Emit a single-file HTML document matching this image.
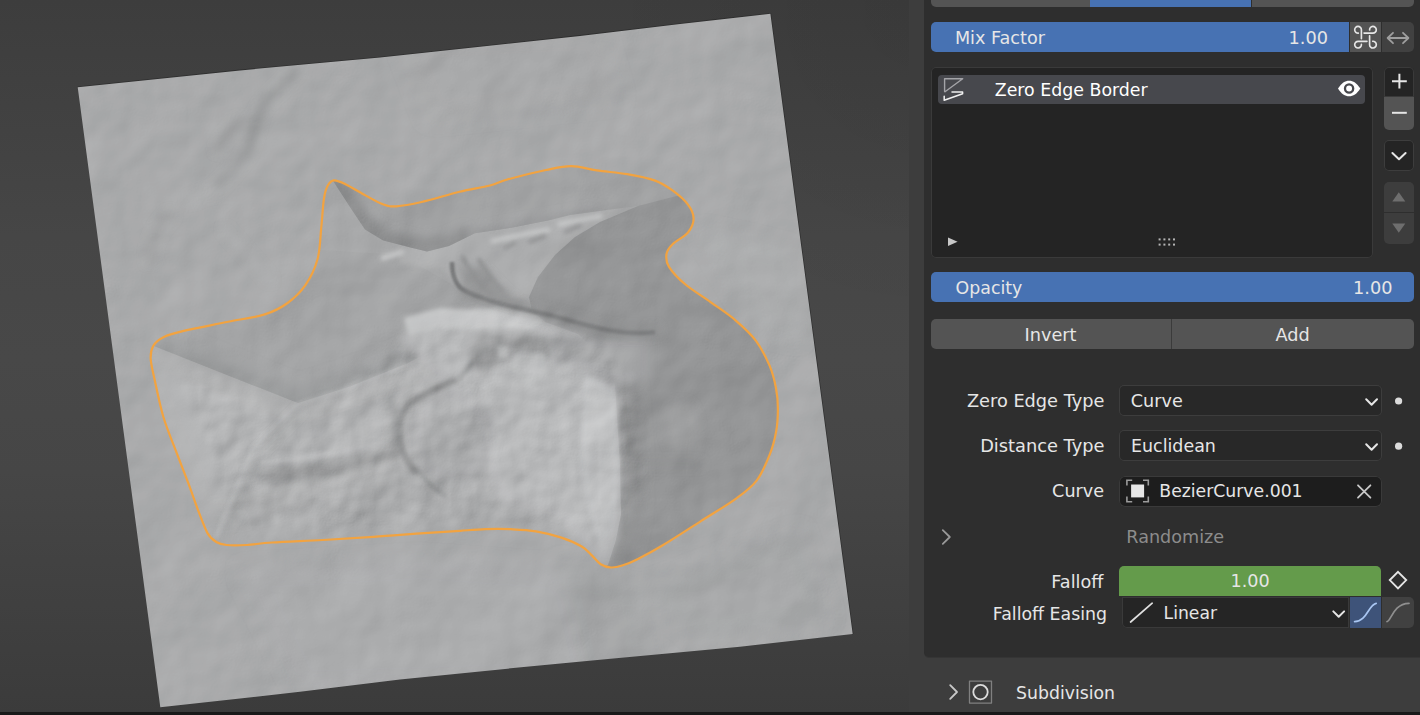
<!DOCTYPE html>
<html><head><meta charset="utf-8"><title>Blender</title>
<style>
html,body{margin:0;padding:0;background:#3d3d3d;}
body{width:1420px;height:715px;position:relative;overflow:hidden;font-family:"DejaVu Sans","Liberation Sans",sans-serif;font-size:17.6px;color:#e6e6e6;}
.abs{position:absolute;}
#vp{position:absolute;left:0;top:0;}
#props{position:absolute;left:909px;top:0;width:511px;height:715px;background:#3d3d3d;}
#panel{position:absolute;left:923.5px;top:0;width:497px;height:657.3px;background:#2e2e2e;border-bottom-left-radius:5px;box-shadow:0 1px 0 #353535;}
#bottom{position:absolute;left:0;top:711.5px;width:1420px;height:4px;background:#191919;}
.t{position:absolute;white-space:pre;line-height:20px;height:20px;}
.lbl{text-align:right;}
.blue{background:#4772b3;}
.btn{background:#545454;}
.fld{background:#282828;box-shadow:inset 0 0 0 1px #3d3d3d;border-radius:5px;}
svg{position:absolute;overflow:visible;}
</style></head><body>
<svg id="vp" width="924" height="715" viewBox="0 0 924 715">
<defs>
<linearGradient id="bg" x1="0" y1="0" x2="0" y2="1"><stop offset="0" stop-color="#3d3d3d"/><stop offset=".33" stop-color="#464646"/><stop offset=".5" stop-color="#484848"/><stop offset=".66" stop-color="#464646"/><stop offset="1" stop-color="#3b3b3b"/></linearGradient>
<clipPath id="quad"><polygon points="77.7,87.3 240,70.4 380,57.5 480,46.8 580,35.9 680,24 720,19.4 770.4,13.8 852.7,634.1 740,646.8 600,659.7 500,669.4 400,679.4 300,691.8 160.3,707.3"/></clipPath>
<clipPath id="inside"><path d="M334.1 180.4C337.1 180.2 340.2 181.7 345.5 184.2C350.8 186.7 359.5 192.2 365.8 195.6C372.1 199.0 378.4 202.7 383.5 204.5C388.6 206.3 389.8 206.7 396.2 206.3C402.6 205.9 411.0 204.4 421.6 202.0C432.2 199.6 448.2 194.6 459.6 191.8C471.0 189.1 481.9 187.6 490.0 185.5C498.1 183.4 498.7 181.9 508.0 179.3C517.3 176.7 535.4 172.2 546.0 170.0C556.6 167.8 562.9 166.0 571.4 166.1C579.9 166.2 587.5 169.1 596.8 170.4C606.1 171.8 617.5 172.5 627.2 174.2C636.9 175.9 647.5 177.8 655.1 180.6C662.7 183.3 667.3 186.7 672.8 190.7C678.3 194.7 684.5 200.0 688.0 204.7C691.5 209.3 693.6 214.0 693.6 218.6C693.6 223.2 691.5 228.3 688.0 232.5C684.5 236.7 676.4 240.4 672.8 244.0C669.2 247.6 667.1 250.2 666.5 254.0C665.9 257.8 665.8 261.7 669.0 266.8C672.2 271.9 678.5 278.6 685.5 284.5C692.5 290.4 702.6 296.3 710.9 302.3C719.2 308.3 728.0 313.9 735.5 320.3C743.0 326.7 750.1 333.0 755.8 340.6C761.5 348.2 766.3 357.9 769.7 365.9C773.1 373.9 774.7 381.5 776.1 388.7C777.5 395.9 777.9 401.8 777.9 409.0C777.9 416.2 777.5 424.2 776.1 431.8C774.7 439.4 773.0 446.6 769.7 454.7C766.5 462.8 762.2 473.3 756.6 480.6C751.0 487.9 745.7 491.6 736.4 498.3C727.1 505.1 713.2 513.3 700.9 521.1C688.6 528.9 673.4 538.9 662.8 545.2C652.2 551.6 644.2 555.8 637.5 559.2C630.8 562.6 626.7 564.1 622.3 565.5C617.9 566.9 614.5 567.7 610.9 567.5C607.3 567.3 603.9 566.2 600.7 564.2C597.5 562.2 595.0 558.4 591.8 555.4C588.6 552.4 586.8 549.5 581.7 546.5C576.6 543.5 569.0 540.1 561.4 537.6C553.8 535.1 544.5 532.7 536.0 531.3C527.5 529.9 519.1 529.6 510.7 529.2C502.3 528.9 493.8 528.9 485.4 529.2C476.9 529.5 470.2 530.1 460.0 530.8C449.8 531.4 438.7 532.1 424.3 533.1C409.9 534.1 390.4 535.8 373.5 536.9C356.6 538.0 339.7 539.1 322.8 540.0C305.9 540.9 284.8 541.7 272.1 542.5C259.4 543.3 254.4 544.6 246.8 545.0C239.2 545.4 231.6 545.5 226.5 545.0C221.4 544.5 219.5 544.0 216.3 542.0C213.1 540.0 210.4 538.2 207.5 533.1C204.6 528.0 201.8 519.8 198.6 511.6C195.4 503.4 192.3 493.9 188.5 483.7C184.7 473.5 180.0 461.8 175.8 450.7C171.6 439.6 167.0 428.9 163.4 417.0C159.8 405.1 156.6 388.7 154.5 379.0C152.4 369.3 150.9 364.2 150.7 358.7C150.5 353.2 151.1 349.6 153.2 346.0C155.3 342.4 158.3 339.7 163.4 337.2C168.5 334.7 173.1 333.4 183.7 330.9C194.3 328.4 213.3 324.8 226.8 322.0C240.3 319.2 254.7 317.6 264.8 314.4C274.9 311.2 280.8 307.9 287.6 303.0C294.4 298.1 300.4 292.5 305.4 285.2C310.4 277.9 314.9 268.9 317.6 259.0C320.3 249.1 320.3 236.1 321.4 226.0C322.5 215.9 322.9 204.9 324.0 198.2C325.1 191.4 326.1 188.5 327.8 185.5C329.5 182.5 331.2 180.6 334.1 180.4Z"/></clipPath>
<filter id="b2" filterUnits="userSpaceOnUse" x="0" y="0" width="924" height="715"><feGaussianBlur stdDeviation="2"/></filter>
<filter id="b4" filterUnits="userSpaceOnUse" x="0" y="0" width="924" height="715"><feGaussianBlur stdDeviation="4"/></filter>
<filter id="b8" filterUnits="userSpaceOnUse" x="0" y="0" width="924" height="715"><feGaussianBlur stdDeviation="8"/></filter>
<filter id="b16" filterUnits="userSpaceOnUse" x="0" y="0" width="924" height="715"><feGaussianBlur stdDeviation="16"/></filter>
<filter id="relief" x="0" y="0" width="100%" height="100%" color-interpolation-filters="sRGB">
<feTurbulence type="fractalNoise" baseFrequency="0.016" numOctaves="3" seed="11" result="n"/>
<feColorMatrix in="n" type="matrix" values="0 0 0 0 0  0 0 0 0 0  0 0 0 0 0  1 0 0 0 0" result="h"/>
<feDiffuseLighting in="h" surfaceScale="5" diffuseConstant="1" lighting-color="#ffffff" result="l"><feDistantLight azimuth="225" elevation="30"/></feDiffuseLighting>
<feComposite in="l" in2="SourceGraphic" operator="in"/>
</filter>
<filter id="relief2" x="0" y="0" width="100%" height="100%" color-interpolation-filters="sRGB">
<feTurbulence type="fractalNoise" baseFrequency="0.02" numOctaves="3" seed="3" result="n"/>
<feColorMatrix in="n" type="matrix" values="0 0 0 0 0  0 0 0 0 0  0 0 0 0 0  1 0 0 0 0" result="h"/>
<feDiffuseLighting in="h" surfaceScale="5" diffuseConstant="1" lighting-color="#ffffff" result="l"><feDistantLight azimuth="225" elevation="30"/></feDiffuseLighting>
<feComposite in="l" in2="SourceGraphic" operator="in"/>
</filter>
<mask id="mtn" maskUnits="userSpaceOnUse" x="100" y="200" width="700" height="420"><path d="M175 365L300 415L410 340L470 312L540 315L610 345L640 400L640 480L610 550L540 525L235 538Z" fill="#fff" filter="url(#b8)"/></mask>
<clipPath id="cband"><path d="M325 170L700 150L700 215L638 206L599 211L570 215L548 220.4L511.4 227.7L474.8 233.2L449 246L427 251.6L412.5 248L383.2 240.6L365 229.6L350.3 207.6L333.8 182Z"/></clipPath>
<clipPath id="cwedge"><path d="M140 335L320 250L400 255L480 300L450 341L408 363L351 386L298 403L154 346Z"/></clipPath>
<clipPath id="cright"><path d="M638 206L700 190L800 300L800 500L615 590L600 570L608 565L616 540L621 515L620 465L615 385L600 355L578 334L545 322L532 311L529 297L538 277L555 255L575 237L600 222Z"/></clipPath>
<radialGradient id="tr" gradientUnits="userSpaceOnUse" cx="924" cy="0" r="330"><stop offset="0" stop-color="#000" stop-opacity=".07"/><stop offset="1" stop-color="#000" stop-opacity="0"/></radialGradient>
<filter id="b1" filterUnits="userSpaceOnUse" x="0" y="0" width="924" height="715"><feGaussianBlur stdDeviation="1.2"/></filter>
</defs>
<rect width="924" height="715" fill="url(#bg)"/><rect width="924" height="715" fill="url(#tr)"/>
<polyline points="77.7,87.3 240,70.4 380,57.5 480,46.8 580,35.9 680,24 720,19.4 770.4,13.8 852.7,634.1" fill="none" stroke="#2c2c2c" stroke-width="1.6" opacity=".8"/>
<g clip-path="url(#quad)">
<rect x="60" y="0" width="810" height="715" fill="#a9aaab"/>
<!--TERRAIN_OUT-->
<g filter="url(#b4)" fill="none" stroke-linecap="round">
<path d="M296 70C280 90 262 100 258 116C254 135 250 145 247 152C235 170 222 182 212 193" stroke="#939495" stroke-width="7"/><path d="M240 120C230 130 222 140 218 150" stroke="#9c9d9e" stroke-width="6"/>
<path d="M170 215C160 225 150 240 150 260" stroke="#a0a1a2" stroke-width="8"/>
<path d="M225 230L270 280" stroke="#b0b1b2" stroke-width="5"/>
<path d="M190 200L215 190" stroke="#b2b3b4" stroke-width="6"/>
</g>
<g filter="url(#b8)">
<path d="M700 230L790 250L800 340L760 330Z" fill="#acadae"/>
<path d="M240 570L420 560L560 570L600 680L300 690Z" fill="#abacad"/>
<path d="M640 590L800 530L830 620L700 640Z" fill="#a6a7a8"/>
<path d="M560 560L640 590L650 690L590 690Z" fill="#a3a4a5"/>
<path d="M400 40L600 30L620 100L430 120Z" fill="#a7a8a9"/>
</g>
<!--/TERRAIN_OUT-->
<g clip-path="url(#inside)">
<!--TERRAIN_IN-->
<!-- general inside tone -->
<rect x="140" y="160" width="650" height="260" fill="#a6a7a8"/><rect x="140" y="420" width="650" height="170" fill="#aaabac"/>
<!-- below-wedge bright area -->
<path d="M140 340L298 405L351 388L408 365L450 343L520 330L560 360L520 420L470 400L420 400L400 440L395 475L300 500L235 515L200 515L150 400Z" fill="#b2b3b4" filter="url(#b8)"/>
<!-- left wedge -->
<path d="M140 335L320 250L400 255L480 300L450 341L408 363L351 386L298 403L154 346Z" fill="#a3a4a5"/>
<g clip-path="url(#cwedge)"><path d="M150 346L298 405L351 388L408 365L452 342" fill="none" stroke="#9a9b9c" stroke-width="26" filter="url(#b8)"/></g>
<!-- bright ridge along wedge right edge + down-left ridge -->
<path d="M298 404L351 387L408 364L450 341L472 320" fill="none" stroke="#bdbebf" stroke-width="2.5" filter="url(#b2)" opacity=".8"/>
<path d="M298 404L253 448L232 500L216 538" fill="none" stroke="#c4c5c6" stroke-width="2.5" filter="url(#b2)" opacity=".8"/><path d="M302 408L258 452L238 502L222 540" fill="none" stroke="#9fa0a1" stroke-width="5" filter="url(#b4)" opacity=".8"/>
<!-- plateau base -->
<path d="M395 225L440 220L520 205L640 195L600 222L575 237L555 255L538 277L529 297L490 300L461 288L440 268L400 264Z" fill="#adaeaf" filter="url(#b2)"/>
<!-- upper band -->
<path d="M325 170L700 150L700 215L638 206L599 211L570 215L548 220.4L511.4 227.7L474.8 233.2L449 246L427 251.6L412.5 248L383.2 240.6L365 229.6L350.3 207.6L333.8 182Z" fill="#a0a1a2"/>
<g clip-path="url(#cband)"><path d="M333 180L350 207L365 229L383 240L412 248L427 251L449 246L470 236" fill="none" stroke="#8c8d8e" stroke-width="22" filter="url(#b4)"/>
<path d="M470 236L511 228L548 221L600 212" fill="none" stroke="#999a9b" stroke-width="10" filter="url(#b4)"/></g>
<!-- plateau -->
<path d="M383 258L402 252M493 241L520 235L548 230M560 224L600 216" fill="none" stroke="#c6c7c8" stroke-width="5" stroke-linecap="round" filter="url(#b2)"/>
<path d="M505 248L515 243M530 242L545 236M565 232L580 226" fill="none" stroke="#8f9091" stroke-width="3" stroke-linecap="round" filter="url(#b2)"/>
<!-- right dark region -->
<path d="M638 206L700 190L800 300L800 500L615 590L600 570L608 565L616 540L621 515L620 465L615 385L600 355L578 334L545 322L532 311L529 297L538 277L555 255L575 237L600 222Z" fill="#949596"/>
<g clip-path="url(#cright)">

<ellipse cx="682" cy="428" rx="16" ry="26" fill="#9d9e9f" filter="url(#b4)"/>
<path d="M625 464L702 464" stroke="#8b8c8d" stroke-width="5" fill="none" filter="url(#b4)"/>
<path d="M624 380L630 465L628 520L618 560" stroke="#8c8d8e" stroke-width="16" fill="none" filter="url(#b8)"/>
</g>
<!-- bright mountain -->
<path d="M406 322L470 312L532 318L580 336L600 356L615 386L620 465L616 540L606 566L560 520L500 500L470 430L440 380L400 340Z" fill="#b7b8b9" filter="url(#b4)"/>
<path d="M585 372L614 388L619 465L614 530L598 545L580 470Z" fill="#c0c1c2" filter="url(#b2)"/>
<path d="M404 318L440 308L470 310L500 306L533 312L545 322L530 330L500 327L470 330L440 328L409 336Z" fill="#c6c7c8" filter="url(#b2)"/>
<!-- darker pocket -->
<path d="M480 332L545 335L552 358L520 350L500 362L480 376L468 352Z" fill="#9c9d9e" filter="url(#b4)"/><path d="M515 356L545 354L550 378L525 384L512 370Z" fill="#bebfc0" filter="url(#b2)"/><path d="M497 346L508 346L508 358L498 358Z" fill="#bcbdbe" filter="url(#b2)"/>
<path d="M552 334L600 338L650 338L650 380L612 386L590 374L557 362Z" fill="#a2a3a4" filter="url(#b4)"/>
<!-- crater interior -->
<ellipse cx="452" cy="436" rx="42" ry="46" fill="#aeafb0" filter="url(#b4)"/>
<!-- crater arc -->
<path d="M458 380C445 384 436 388 425 394C410 402 400 412 399 425C398 450 408 466 418 472" fill="none" stroke="#8d8e8f" stroke-width="6.5" filter="url(#b2)"/><path d="M418 472C424 478 430 484 434 488L446 497" fill="none" stroke="#939495" stroke-width="3.5" filter="url(#b2)"/><path d="M388 395L396 420L394 450" fill="none" stroke="#9a9b9c" stroke-width="8" filter="url(#b4)"/><path d="M458 380L474 361L488 344" fill="none" stroke="#939495" stroke-width="4" filter="url(#b2)"/>
<!-- dark streak left-bottom -->
<path d="M258 470L330 462L393 448L399 458L330 476L262 484Z" fill="#979899" filter="url(#b4)"/><path d="M262 462L300 458L340 452L385 442" fill="none" stroke="#bfc0c1" stroke-width="3" filter="url(#b2)"/>
<!-- ridge -->
<path d="M462 289C475 297 505 305 532 311C560 317 590 327 608 330C625 333 640 333 660 330" fill="none" stroke="#8c8d8e" stroke-width="11" filter="url(#b4)" opacity=".8"/><path d="M452 262C452 275 456 285 462 289C475 297 505 305 532 311C560 317 590 327 608 330C625 333 640 334 655 332" fill="none" stroke="#7c7d7e" stroke-width="4.5" filter="url(#b1)"/>
<path d="M462 256C470 270 478 285 492 296M478 258C485 270 492 280 503 292" fill="none" stroke="#8c8d8e" stroke-width="3" filter="url(#b2)"/><path d="M458 268L470 290L500 302L530 310L505 290L485 268Z" fill="#8e8f90" filter="url(#b4)" opacity=".8"/>
<!--/TERRAIN_IN-->
</g>
<rect x="60" y="0" width="810" height="715" fill="#fff" filter="url(#relief)" style="mix-blend-mode:overlay" opacity="0.18"/>
<g mask="url(#mtn)" clip-path="url(#inside)" style="mix-blend-mode:overlay" opacity="0.38"><rect x="100" y="200" width="700" height="420" fill="#fff" filter="url(#relief2)"/></g>
</g>
<path d="M334.1 180.4C337.1 180.2 340.2 181.7 345.5 184.2C350.8 186.7 359.5 192.2 365.8 195.6C372.1 199.0 378.4 202.7 383.5 204.5C388.6 206.3 389.8 206.7 396.2 206.3C402.6 205.9 411.0 204.4 421.6 202.0C432.2 199.6 448.2 194.6 459.6 191.8C471.0 189.1 481.9 187.6 490.0 185.5C498.1 183.4 498.7 181.9 508.0 179.3C517.3 176.7 535.4 172.2 546.0 170.0C556.6 167.8 562.9 166.0 571.4 166.1C579.9 166.2 587.5 169.1 596.8 170.4C606.1 171.8 617.5 172.5 627.2 174.2C636.9 175.9 647.5 177.8 655.1 180.6C662.7 183.3 667.3 186.7 672.8 190.7C678.3 194.7 684.5 200.0 688.0 204.7C691.5 209.3 693.6 214.0 693.6 218.6C693.6 223.2 691.5 228.3 688.0 232.5C684.5 236.7 676.4 240.4 672.8 244.0C669.2 247.6 667.1 250.2 666.5 254.0C665.9 257.8 665.8 261.7 669.0 266.8C672.2 271.9 678.5 278.6 685.5 284.5C692.5 290.4 702.6 296.3 710.9 302.3C719.2 308.3 728.0 313.9 735.5 320.3C743.0 326.7 750.1 333.0 755.8 340.6C761.5 348.2 766.3 357.9 769.7 365.9C773.1 373.9 774.7 381.5 776.1 388.7C777.5 395.9 777.9 401.8 777.9 409.0C777.9 416.2 777.5 424.2 776.1 431.8C774.7 439.4 773.0 446.6 769.7 454.7C766.5 462.8 762.2 473.3 756.6 480.6C751.0 487.9 745.7 491.6 736.4 498.3C727.1 505.1 713.2 513.3 700.9 521.1C688.6 528.9 673.4 538.9 662.8 545.2C652.2 551.6 644.2 555.8 637.5 559.2C630.8 562.6 626.7 564.1 622.3 565.5C617.9 566.9 614.5 567.7 610.9 567.5C607.3 567.3 603.9 566.2 600.7 564.2C597.5 562.2 595.0 558.4 591.8 555.4C588.6 552.4 586.8 549.5 581.7 546.5C576.6 543.5 569.0 540.1 561.4 537.6C553.8 535.1 544.5 532.7 536.0 531.3C527.5 529.9 519.1 529.6 510.7 529.2C502.3 528.9 493.8 528.9 485.4 529.2C476.9 529.5 470.2 530.1 460.0 530.8C449.8 531.4 438.7 532.1 424.3 533.1C409.9 534.1 390.4 535.8 373.5 536.9C356.6 538.0 339.7 539.1 322.8 540.0C305.9 540.9 284.8 541.7 272.1 542.5C259.4 543.3 254.4 544.6 246.8 545.0C239.2 545.4 231.6 545.5 226.5 545.0C221.4 544.5 219.5 544.0 216.3 542.0C213.1 540.0 210.4 538.2 207.5 533.1C204.6 528.0 201.8 519.8 198.6 511.6C195.4 503.4 192.3 493.9 188.5 483.7C184.7 473.5 180.0 461.8 175.8 450.7C171.6 439.6 167.0 428.9 163.4 417.0C159.8 405.1 156.6 388.7 154.5 379.0C152.4 369.3 150.9 364.2 150.7 358.7C150.5 353.2 151.1 349.6 153.2 346.0C155.3 342.4 158.3 339.7 163.4 337.2C168.5 334.7 173.1 333.4 183.7 330.9C194.3 328.4 213.3 324.8 226.8 322.0C240.3 319.2 254.7 317.6 264.8 314.4C274.9 311.2 280.8 307.9 287.6 303.0C294.4 298.1 300.4 292.5 305.4 285.2C310.4 277.9 314.9 268.9 317.6 259.0C320.3 249.1 320.3 236.1 321.4 226.0C322.5 215.9 322.9 204.9 324.0 198.2C325.1 191.4 326.1 188.5 327.8 185.5C329.5 182.5 331.2 180.6 334.1 180.4Z" fill="none" stroke="#f2a340" stroke-width="2.2"/>
</svg>
<div id="props"></div>
<div id="panel"></div>
<!-- top tabs -->
<div class="abs btn" style="left:930.5px;top:-3px;width:159px;height:10px;border-radius:0 0 0 5px;"></div>
<div class="abs blue" style="left:1090.3px;top:-3px;width:161px;height:10px;"></div>
<div class="abs btn" style="left:1252.1px;top:-3px;width:161.5px;height:10px;border-radius:0 0 5px 0;"></div>
<!-- mix factor -->
<div class="abs blue" style="left:930.5px;top:22px;width:418.6px;height:30px;border-radius:5px 0 0 5px;"></div>
<div class="abs btn" style="left:1349.7px;top:22px;width:31.3px;height:30px;"></div>
<div class="abs" style="left:1381.6px;top:22px;width:32.8px;height:30px;background:#414141;border-radius:0 5px 5px 0;"></div>
<div class="t" style="left:954.9px;top:28.1px;font-size:17.63px;">Mix Factor</div>
<div class="t" style="left:1288.5px;top:28.1px;font-size:17.7px;">1.00</div>
<!-- list box -->
<div class="abs" style="left:930.5px;top:66.8px;width:442px;height:191.5px;background:#242424;box-shadow:inset 0 0 0 1px #3a3a3a;border-radius:5px;"></div>
<div class="abs" style="left:938.3px;top:75px;width:426.4px;height:29.2px;background:#47484d;border-radius:4px;"></div>
<div class="t" style="left:994.8px;top:80px;color:#fff;font-size:17.37px;">Zero Edge Border</div>
<!-- plus/minus -->
<div class="abs" style="left:1383.7px;top:66.8px;width:30px;height:30.3px;background:#242424;box-shadow:inset 0 0 0 1px #3a3a3a;border-radius:5px 5px 0 0;"></div>
<div class="abs btn" style="left:1383.7px;top:97.1px;width:30px;height:33px;border-radius:0 0 5px 5px;"></div>
<div class="abs" style="left:1383.7px;top:140.2px;width:30px;height:30.8px;background:#242424;box-shadow:inset 0 0 0 1px #3d3d3d;border-radius:5px;"></div>
<div class="abs" style="left:1383.7px;top:181.8px;width:30px;height:30.4px;background:#3d3d3d;border-radius:5px 5px 0 0;"></div>
<div class="abs" style="left:1383.7px;top:213px;width:30px;height:31.3px;background:#3d3d3d;border-radius:0 0 5px 5px;"></div>
<!-- opacity -->
<div class="abs blue" style="left:930.5px;top:272px;width:483.3px;height:29.7px;border-radius:5px;"></div>
<div class="t" style="left:955.6px;top:277.8px;font-size:17.36px;">Opacity</div>
<div class="t" style="left:1353px;top:277.8px;font-size:17.7px;">1.00</div>
<!-- invert/add -->
<div class="abs btn" style="left:930.5px;top:319px;width:240px;height:30.2px;border-radius:5px 0 0 5px;"></div>
<div class="abs btn" style="left:1171.4px;top:319px;width:242.4px;height:30.2px;border-radius:0 5px 5px 0;"></div>
<div class="t" style="left:930.5px;width:240px;text-align:center;top:324.9px;font-size:17.7px;">Invert</div>
<div class="t" style="left:1171.4px;width:242.4px;text-align:center;top:324.9px;font-size:17.7px;">Add</div>
<div class="abs" style="left:1170.5px;top:319px;width:1px;height:30.2px;background:#3b3b3b;"></div>
<!-- zero edge type -->
<div class="t lbl" style="right:315.6px;top:390.8px;font-size:17.74px;">Zero Edge Type</div>
<div class="abs fld" style="left:1118.6px;top:385.3px;width:263.4px;height:30.9px;"></div>
<div class="t" style="left:1130.8px;top:390.8px;">Curve</div>
<!-- distance type -->
<div class="t lbl" style="right:315.6px;top:435.7px;font-size:17.8px;">Distance Type</div>
<div class="abs fld" style="left:1118.6px;top:430.2px;width:263.4px;height:30.8px;"></div>
<div class="t" style="left:1131px;top:435.7px;font-size:17.45px;">Euclidean</div>
<!-- curve -->
<div class="t lbl" style="right:316px;top:481.1px;">Curve</div>
<div class="abs" style="left:1118.6px;top:475.5px;width:263.4px;height:31.2px;background:#1d1d1d;box-shadow:inset 0 0 0 1px #3a3a3a;border-radius:6px;"></div>
<div class="t" style="left:1159.3px;top:481.1px;font-size:17.26px;">BezierCurve.001</div>
<!-- randomize -->
<div class="t" style="left:1126.3px;top:526.6px;color:#8c8c8c;">Randomize</div>
<!-- falloff -->
<div class="t lbl" style="right:316.7px;top:571.5px;">Falloff</div>
<div class="abs" style="left:1118.8px;top:566px;width:262.5px;height:30px;background:#649b4b;border-radius:5px 5px 0 0;"></div>
<div class="t" style="left:1118.8px;width:262.5px;text-align:center;top:571.4px;">1.00</div>
<!-- falloff easing -->
<div class="t lbl" style="right:313px;top:603.6px;font-size:17.35px;">Falloff Easing</div>
<div class="abs" style="left:1122.2px;top:596.7px;width:227.3px;height:31.4px;background:#252525;box-shadow:inset 0 0 0 1px #3a3a3a;border-radius:0 0 0 5px;"></div>
<div class="abs" style="left:1349.5px;top:596.7px;width:31.8px;height:31.4px;background:#3e5379;"></div>
<div class="abs" style="left:1381.8px;top:596.7px;width:32.3px;height:31.4px;background:#414141;border-radius:0 5px 5px 0;"></div>
<div class="t" style="left:1163.6px;top:603.2px;font-size:17.19px;">Linear</div>
<!-- subdivision -->
<div class="t" style="left:1016.1px;top:683px;font-size:17.28px;">Subdivision</div>
<!-- icons -->
<svg class="abs" style="left:0;top:0;" width="1420" height="715" viewBox="0 0 1420 715" fill="none" stroke-linecap="round" stroke-linejoin="round">
<!-- pinwheel -->
<g transform="translate(1365.5 37.2)" stroke="#e6e6e6" stroke-width="1.65">
<path id="hk" d="M-4.1 1.5V-7.45A3.35 3.35 0 1 0 -7.2 -4.1"/>
<use href="#hk" transform="rotate(90)"/><use href="#hk" transform="rotate(180)"/><use href="#hk" transform="rotate(270)"/>
</g>
<!-- double arrow -->
<path d="M1388 38H1408M1393 32.8L1387.6 38L1393 43.2M1403 32.8L1408.4 38L1403 43.2" stroke="#9e9e9e" stroke-width="1.8"/>
<!-- list item icon -->
<path d="M944.6 91.6V78.8H962.7L945 91.8" stroke="#a4a4a8" stroke-width="1.4"/>
<path d="M952 91.9H962.6V93.7L944.2 100.3V96.3" stroke="#f0f0f0" stroke-width="1.5"/>
<!-- eye -->
<path d="M1338 88.5C1341.5 83 1345 80.7 1349.1 80.7C1353.2 80.7 1356.8 83 1360.3 88.5C1356.8 94 1353.2 96.3 1349.1 96.3C1345 96.3 1341.5 94 1338 88.5Z" fill="#fff" stroke="none"/>
<circle cx="1349.1" cy="88.5" r="4.1" stroke="#47484d" stroke-width="2.3"/>
<!-- plus minus -->
<path d="M1392 81.2H1406.8M1399.4 73.8V88.6" stroke="#e6e6e6" stroke-width="2" stroke-linecap="butt"/>
<path d="M1392 112.8H1406.8" stroke="#e6e6e6" stroke-width="2" stroke-linecap="butt"/>
<!-- chevron down button -->
<path d="M1392.4 153L1399 159.3L1405.6 153" stroke="#e6e6e6" stroke-width="2"/>
<!-- up/down triangles -->
<path d="M1392.3 201.5L1398.8 192.3L1405.3 201.5Z" fill="#6e6e6e" stroke="none"/>
<path d="M1392.3 223.5L1398.8 232.7L1405.3 223.5Z" fill="#6e6e6e" stroke="none"/>
<!-- list bottom: play triangle and grip -->
<path d="M948 237.4L957.6 241.7L948 246Z" fill="#c8c8c8" stroke="none"/>
<g fill="#b4b4b4" stroke="none">
<rect x="1158.6" y="238.4" width="2" height="2"/><rect x="1163.4" y="238.4" width="2" height="2"/><rect x="1168.2" y="238.4" width="2" height="2"/><rect x="1173" y="238.4" width="2" height="2"/>
<rect x="1158.6" y="243.6" width="2" height="2"/><rect x="1163.4" y="243.6" width="2" height="2"/><rect x="1168.2" y="243.6" width="2" height="2"/><rect x="1173" y="243.6" width="2" height="2"/>
</g>
<!-- dropdown chevrons -->
<path d="M1366.2 399.3L1371.6 404.7L1377 399.3" stroke="#e6e6e6" stroke-width="2"/>
<path d="M1366.2 444.3L1371.6 449.7L1377 444.3" stroke="#e6e6e6" stroke-width="2"/>
<path d="M1333.3 611.4L1338.7 616.8L1344.1 611.4" stroke="#e6e6e6" stroke-width="2"/>
<!-- dots -->
<circle cx="1398.6" cy="401" r="3.6" fill="#dcdcdc" stroke="none"/>
<circle cx="1398.6" cy="446.2" r="3.6" fill="#dcdcdc" stroke="none"/>
<!-- object icon -->
<path d="M1126.9 485.4V480.3H1132.2M1143 480.3H1148.3V485.4M1148.3 496.6V501.7H1143M1132.2 501.7H1126.9V496.6" stroke="#9c9c9c" stroke-width="1.6" stroke-linecap="butt" stroke-linejoin="miter"/>
<rect x="1131.1" y="484.5" width="13" height="12.9" fill="#e6e6e6" stroke="none"/>
<!-- X -->
<path d="M1358 485.3L1370.4 497.7M1370.4 485.3L1358 497.7" stroke="#c8c8c8" stroke-width="1.8"/>
<!-- randomize chevron -->
<path d="M942.8 530.2L949.8 537L942.8 543.8" stroke="#999" stroke-width="1.8"/>
<!-- diamond -->
<path d="M1398 571.9L1406.2 580.1L1398 588.3L1389.8 580.1Z" stroke="#e6e6e6" stroke-width="1.9" stroke-linejoin="miter"/>
<!-- linear icon -->
<path d="M1130.6 622L1152.2 603.2" stroke="#e0e0e0" stroke-width="1.7"/>
<!-- ease curves -->
<path d="M1354.6 621.6C1367 621.6 1368.5 604.5 1376.2 603.3" stroke="#a9c6f2" stroke-width="1.7"/>
<path d="M1387 621.6C1391 621.6 1393 603.5 1409 603.3" stroke="#8f8f8f" stroke-width="1.7"/>
<!-- subdivision header -->
<path d="M950.2 685.2L957 692L950.2 698.8" stroke="#c8c8c8" stroke-width="1.8"/>
<rect x="969.5" y="681.1" width="22" height="22" stroke="#808080" stroke-width="1.3"/>
<circle cx="980.5" cy="692.1" r="7.2" stroke="#dcdcdc" stroke-width="1.8"/>
</svg>

<div id="bottom"></div>
</body></html>
